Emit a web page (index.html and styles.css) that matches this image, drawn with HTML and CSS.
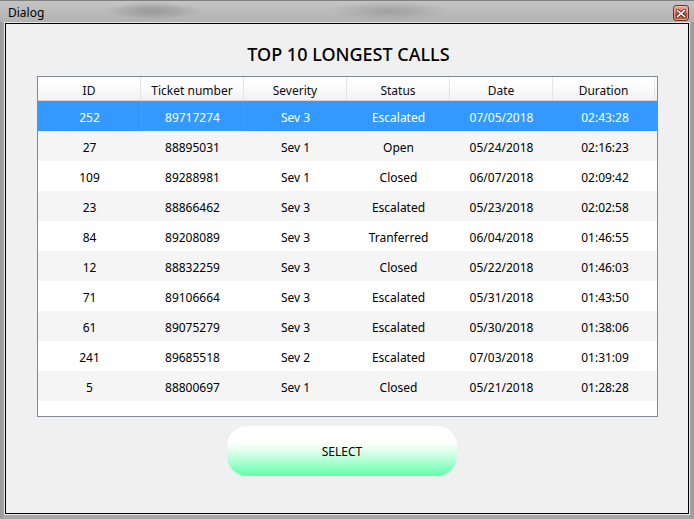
FILE: index.html
```html
<!DOCTYPE html>
<html>
<head>
<meta charset="utf-8">
<link rel="stylesheet" href="styles.css">
</head>
<body>
<div class="window">
  <div class="titlebar">
    <span class="title">Dialog</span>
    <div class="close">
      <svg width="10" height="9" viewBox="0 0 10 9">
        <path d="M1.5 1.5 L8.5 7.5 M8.5 1.5 L1.5 7.5" stroke="#3a2a28" stroke-width="3.2" stroke-linecap="square"/>
        <path d="M1.5 1.5 L8.5 7.5 M8.5 1.5 L1.5 7.5" stroke="#ffffff" stroke-width="1.6" stroke-linecap="square"/>
      </svg>
    </div>
  </div>
  <div class="frame">
    <div class="client">
      <h1 class="heading">TOP 10 LONGEST CALLS</h1>
      <div class="table">
        <div class="row head">
          <div class="cell">ID</div><div class="cell">Ticket number</div><div class="cell">Severity</div><div class="cell">Status</div><div class="cell">Date</div><div class="cell">Duration</div>
        </div>
        <div class="row sel">
          <div class="cell">252</div><div class="cell focus">89717274</div><div class="cell">Sev 3</div><div class="cell">Escalated</div><div class="cell">07/05/2018</div><div class="cell">02:43:28</div>
        </div>
        <div class="row alt">
          <div class="cell">27</div><div class="cell">88895031</div><div class="cell">Sev 1</div><div class="cell">Open</div><div class="cell">05/24/2018</div><div class="cell">02:16:23</div>
        </div>
        <div class="row">
          <div class="cell">109</div><div class="cell">89288981</div><div class="cell">Sev 1</div><div class="cell">Closed</div><div class="cell">06/07/2018</div><div class="cell">02:09:42</div>
        </div>
        <div class="row alt">
          <div class="cell">23</div><div class="cell">88866462</div><div class="cell">Sev 3</div><div class="cell">Escalated</div><div class="cell">05/23/2018</div><div class="cell">02:02:58</div>
        </div>
        <div class="row">
          <div class="cell">84</div><div class="cell">89208089</div><div class="cell">Sev 3</div><div class="cell">Tranferred</div><div class="cell">06/04/2018</div><div class="cell">01:46:55</div>
        </div>
        <div class="row alt">
          <div class="cell">12</div><div class="cell">88832259</div><div class="cell">Sev 3</div><div class="cell">Closed</div><div class="cell">05/22/2018</div><div class="cell">01:46:03</div>
        </div>
        <div class="row">
          <div class="cell">71</div><div class="cell">89106664</div><div class="cell">Sev 3</div><div class="cell">Escalated</div><div class="cell">05/31/2018</div><div class="cell">01:43:50</div>
        </div>
        <div class="row alt">
          <div class="cell">61</div><div class="cell">89075279</div><div class="cell">Sev 3</div><div class="cell">Escalated</div><div class="cell">05/30/2018</div><div class="cell">01:38:06</div>
        </div>
        <div class="row">
          <div class="cell">241</div><div class="cell">89685518</div><div class="cell">Sev 2</div><div class="cell">Escalated</div><div class="cell">07/03/2018</div><div class="cell">01:31:09</div>
        </div>
        <div class="row alt">
          <div class="cell">5</div><div class="cell">88800697</div><div class="cell">Sev 1</div><div class="cell">Closed</div><div class="cell">05/21/2018</div><div class="cell">01:28:28</div>
        </div>
      </div>
      <div class="btnwrap">
        <button class="select">SELECT</button>
      </div>
    </div>
  </div>
</div>
</body>
</html>
```
FILE: styles.css
```css
html, body {
  margin: 0;
  padding: 0;
}
body {
  width: 694px;
  height: 519px;
  overflow: hidden;
  font-family: "Noto Sans", "Open Sans", sans-serif;
  font-size: 12px;
  color: #000;
}
.window {
  width: 694px;
  height: 519px;
  box-sizing: border-box;
  padding: 0 4px 4px 4px;
  display: flex;
  flex-direction: column;
  background: linear-gradient(to right, #9a9a9a 0px, #a8a8a8 6px, #a8a8a8 688px, #9a9a9a 694px);
  border-top: 1px solid #808080;
}
.titlebar {
  height: 21px;
  display: flex;
  justify-content: space-between;
  align-items: flex-start;
  margin: 0 -4px;
  padding-left: 8px;
  padding-right: 5px;
  background:
    radial-gradient(ellipse 40px 10px at 150px 10px, rgba(150,150,150,0.55), rgba(150,150,150,0)),
    radial-gradient(ellipse 50px 8px at 155px 10px, rgba(110,110,110,0.35), rgba(110,110,110,0)),
    radial-gradient(ellipse 60px 10px at 390px 10px, rgba(120,120,120,0.4), rgba(120,120,120,0)),
    linear-gradient(to bottom, #c4c4c4, #b2b2b2);
}
.title {
  font-size: 12px;
  line-height: 12px;
  padding-top: 6px;
  color: #000;
}
.close {
  width: 14px;
  height: 14px;
  margin-top: 4px;
  border: 1px solid #5e3a34;
  border-radius: 3px;
  background: linear-gradient(to bottom, #eea596 0%, #e07a62 45%, #c8452a 55%, #d0603f 100%);
  display: flex;
  align-items: center;
  justify-content: center;
  box-shadow: inset 0 0 0 1px rgba(255,220,210,0.45);
}
.close svg {
  display: block;
}
.frame {
  flex: 1;
  border: 1px solid #e6e6e6;
  display: flex;
}
.client {
  flex: 1;
  border: 1px solid #000;
  background: #f0f0f0;
  display: flex;
  flex-direction: column;
}
.heading {
  margin: 0;
  padding-top: 18px;
  padding-left: 3px;
  height: 24px;
  line-height: 24px;
  margin-bottom: 10px;
  text-align: center;
  font-size: 18px;
  font-weight: 500;
  color: #000;
}
.table {
  width: 619px;
  height: 339px;
  margin-left: 31px;
  border: 1px solid #828790;
  background: #fff;
  display: flex;
  flex-direction: column;
}
.row {
  display: grid;
  grid-template-columns: 103px 103px 103px 103px 103px 104px;
  height: 30px;
  line-height: 34px;
  background: #fff;
}
.row.alt {
  background: #f5f5f5;
}
.row.head {
  height: 23px;
  line-height: 27px;
  border-bottom: 1px solid #d5d5d5;
  background: linear-gradient(to bottom, #ffffff 0%, #fbfbfb 50%, #f2f2f3 100%);
  grid-template-columns: 103px 103px 103px 103px 103px 102px;
}
.row.head .cell {
  border-right: 1px solid #e3e4e7;
  box-sizing: border-box;
  color: #0a0a14;
}
.cell {
  text-align: center;
  white-space: nowrap;
  overflow: hidden;
}
.row.sel {
  background: #3399ff;
  color: #fff;
}
.row.sel .cell {
  color: #fff;
}
.cell.focus {
  outline: 1px dotted #d08a40;
  outline-offset: -1px;
}
.btnwrap {
  padding-top: 9px;
  padding-left: 221px;
}
.select {
  display: block;
  width: 230px;
  height: 50px;
  border: none;
  border-radius: 20px;
  background: linear-gradient(to bottom, #ffffff 0%, #ffffff 34%, #c8ffe0 60%, #62ffab 100%);
  font-family: "Noto Sans", "Open Sans", sans-serif;
  font-size: 12px;
  color: #000;
  padding: 0;
}
```
